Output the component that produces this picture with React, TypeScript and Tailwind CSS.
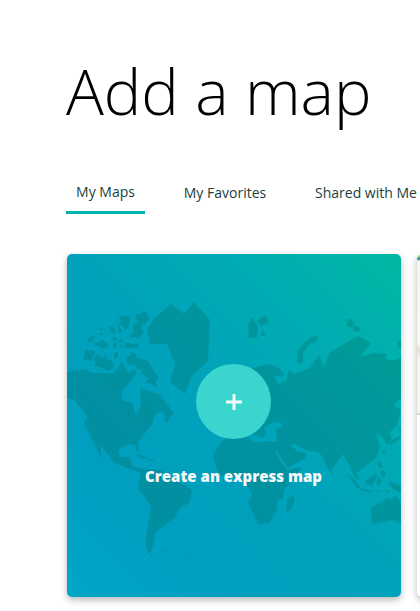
import { useState } from "react";

const tabs = [
  { label: "My Maps", width: "min-w-[79px]" },
  { label: "My Favorites", width: "min-w-[104px]" },
  { label: "Shared with Me", width: "min-w-[122px]" },
];

function WorldMap() {
  return (
    <svg
      viewBox="0 0 334 343"
      preserveAspectRatio="xMidYMid slice"
      className="absolute inset-0 h-full w-full"
      aria-hidden="true"
    >
      <g fill="#006f68" fillOpacity="0.32">
        {/* North and South America */}
        <path d="M0 118 18 115 25 119 47 119 55 107 61 119 68 115 70 119 55 137 55 146 65 149 69 161 74 151 73 134 93 141 107 159 99 168 97 158 89 159 85 171 86 169 71 188 72 198 69 196 68 191 61 190 51 196 53 203 63 203 66 213 81 215 93 216 110 226 125 236 122 249 113 254 108 263 89 278 85 296 82 300 78 291 84 252 71 234 74 219 47 209 34 191 34 204 17 169 20 162 7 146 0 144Z" />
        {/* Greenland */}
        <path d="M80 76 86 66 104 50 117 60 127 48 143 66 141 107 124 123 118 140 103 128 108 111 100 90 83 90Z" />
        {/* Arctic archipelago */}
        <path d="M51 63 58 61 63 63 62 73 58 76 56 72 52 70 54 66Z" />
        <path d="M68 60 74 60 76 58 81 59 79 62 83 62 80 69 76 70 74 74 77 79 70 85 68 83 62 84 64 80 67 78 66 70 71 69Z" />
        <path d="M19 96 29 97 24 107 16 105Z" />
        <path d="M26 104 32 100 35 104 40 99 39 104 46 108 47 113 42 117 34 113 27 112 29 109Z" />
        <path d="M21 88 22 84 27 81 28 84 24 88ZM27 89 33 88 34 85 41 90 40 93 34 95 33 92 28 92Z" />
        <path d="M31 75 36 74 35 77ZM30 80 36 79 34 81ZM41 71 48 74 49 79 44 78ZM51 69 55 78 51 79ZM46 82 50 84 49 87 45 86ZM53 84 56 86 55 89 52 88ZM46 90 50 88 50 93 47 94ZM52 91 56 91 56 94ZM58 88 66 90 72 90 71 94 58 94ZM47 99 51 98 51 103 47 106ZM73 117 76 117 77 120 74 121Z" />
        <path d="M60 101 63 103 65 98 69 100 70 104 80 106 85 114 92 124 89 127 90 134 83 129 78 129 82 124 77 122 76 116 71 115 68 110 63 112 59 108Z" />
        {/* Caribbean and South Atlantic islands */}
        <path d="M67 200 75 201 81 205 75 205ZM80 206 85 205 88 207 81 207ZM97 166 102 166 99 168ZM84 301 88 303 83 303ZM93 297 96 296 98 298ZM122 302 125 301 124 303Z" />
        {/* Svalbard and Novaya Zemlya */}
        <path d="M185 63 191 73 190 84 182 84 181 71ZM190 66 199 61 202 68 194 72ZM196 76 199 82 194 82ZM245 83 250 82 250 88 243 89 236 99 236 108 232 110 230 106 231 96 238 88ZM275 66 279 65 278 68ZM281 66 284 64 287 70 284 74 279 71ZM287 71 292 73 294 76 289 78 286 76ZM330 87 334 87 334 95 331 94Z" />
        {/* Europe, Asia and Africa */}
        <path fillRule="evenodd" d="M186 114 202 110 210 113 217 119 216 123 207 122 211 130 220 126 221 116 227 120 243 114 252 101 257 113 263 98 291 82 304 89 293 103 306 99 320 100 318 105 326 107 334 103 334 145 326 151 334 156 330 171 322 179 325 184 320 191 315 183 309 179 313 193 309 204 296 214 291 219 288 216 293 226 288 224 283 213 276 200 263 218 253 199 250 198 238 196 228 190 224 191 230 197 239 199 239 204 221 214 208 194 210 201 220 216 234 213 230 222 218 234 216 244 210 248 210 256 202 269 191 270 181 249 185 241 180 231 176 222 156 223 149 214 146 201 155 187 165 181 178 180 164 170 160 148 170 130ZM180 183 186 180 196 184 199 179 197 173 207 168 214 169 216 173 209 175 210 188 198 187 188 189Z" />
        {/* Madagascar */}
        <path d="M220 246 226 241 228 246 223 257 219 257Z" />
        {/* Japan and Southeast Asia */}
        <path d="M322 188 327 185 334 181 334 184 328 188 324 191ZM332 176 334 172 334 178ZM310 209 314 208 315 214 312 213ZM315 216 319 219 317 224 313 220ZM311 223 315 226 312 232 309 230ZM280 220 285 223 293 233 291 235ZM293 234 306 237 305 239 295 237ZM298 226 302 225 308 219 310 223 305 232 299 229ZM308 236 315 237 312 238ZM318 236 323 237 319 239ZM322 227 327 229 334 232 334 239 328 236 323 232ZM264 216 266 219 265 221ZM317 195 319 201 315 200Z" />
        {/* Australia */}
        <path d="M304 253 313 249 320 244 325 246 328 241 334 249 334 270 326 266 305 270Z" />
      </g>
    </svg>
  );
}

function ExpressMapCard() {
  return (
    <button
      type="button"
      className="relative flex h-[343px] w-[334px] shrink-0 flex-col items-center overflow-hidden rounded-[5px] bg-[linear-gradient(45deg,#00a5c8_0%,#009fbf_25%,#00a2bb_50%,#00acb3_75%,#00b8a3_100%)] pt-[110px] pr-px text-[#f4f8f8] shadow-[0_3px_7px_rgba(0,0,0,0.28)]"
    >
      <WorldMap />
      <span className="relative flex size-[75px] items-center justify-center rounded-full bg-[#3bd5d0]">
        <svg viewBox="0 0 18 18" className="size-[18px]" aria-hidden="true">
          <path d="M9 1V17M1 9H17" fill="none" stroke="currentColor" strokeWidth="3" />
        </svg>
      </span>
      <span className="relative mt-[25px] text-[15px] leading-6 font-extrabold">
        Create an express map
      </span>
    </button>
  );
}

function SavedMapCard() {
  return (
    <article
      aria-label="Saved map"
      className="flex h-[343px] w-[334px] shrink-0 flex-col overflow-hidden rounded-[5px] bg-white shadow-[0_3px_7px_rgba(0,0,0,0.28)]"
    >
      <div className="h-[159px] bg-[linear-gradient(180deg,#dfe8dc_0px,#7fce7b_3px,#2f7fa9_5px,#f4f4ee_7px,#f8f7f2_90px,#e0ddd5_96px,#f6f5f0_104px)]" />
      <div className="flex-1 border-t-2 border-[#d5d5d5]" />
    </article>
  );
}

export default function App() {
  const [active, setActive] = useState("My Maps");

  return (
    <main className="overflow-hidden bg-white pt-[51px] pb-3 pl-[66px] font-['Open_Sans',sans-serif]">
      <h1 className="text-[63px] leading-[80px] font-light whitespace-nowrap text-black">
        Add a map
      </h1>
      <div role="tablist" className="mt-[46px] flex gap-7">
        {tabs.map(({ label, width }) => (
          <button
            key={label}
            type="button"
            role="tab"
            aria-selected={active === label}
            onClick={() => setActive(label)}
            className={`h-[37px] shrink-0 pb-1 text-sm leading-5 whitespace-nowrap text-[#173f3d] ${width} ${
              active === label
                ? "border-b-3 border-[#00b5b0]"
                : "border-b border-transparent"
            }`}
          >
            {label}
          </button>
        ))}
      </div>
      <section className="mt-10 flex gap-4 pl-px">
        <ExpressMapCard />
        <SavedMapCard />
      </section>
    </main>
  );
}
